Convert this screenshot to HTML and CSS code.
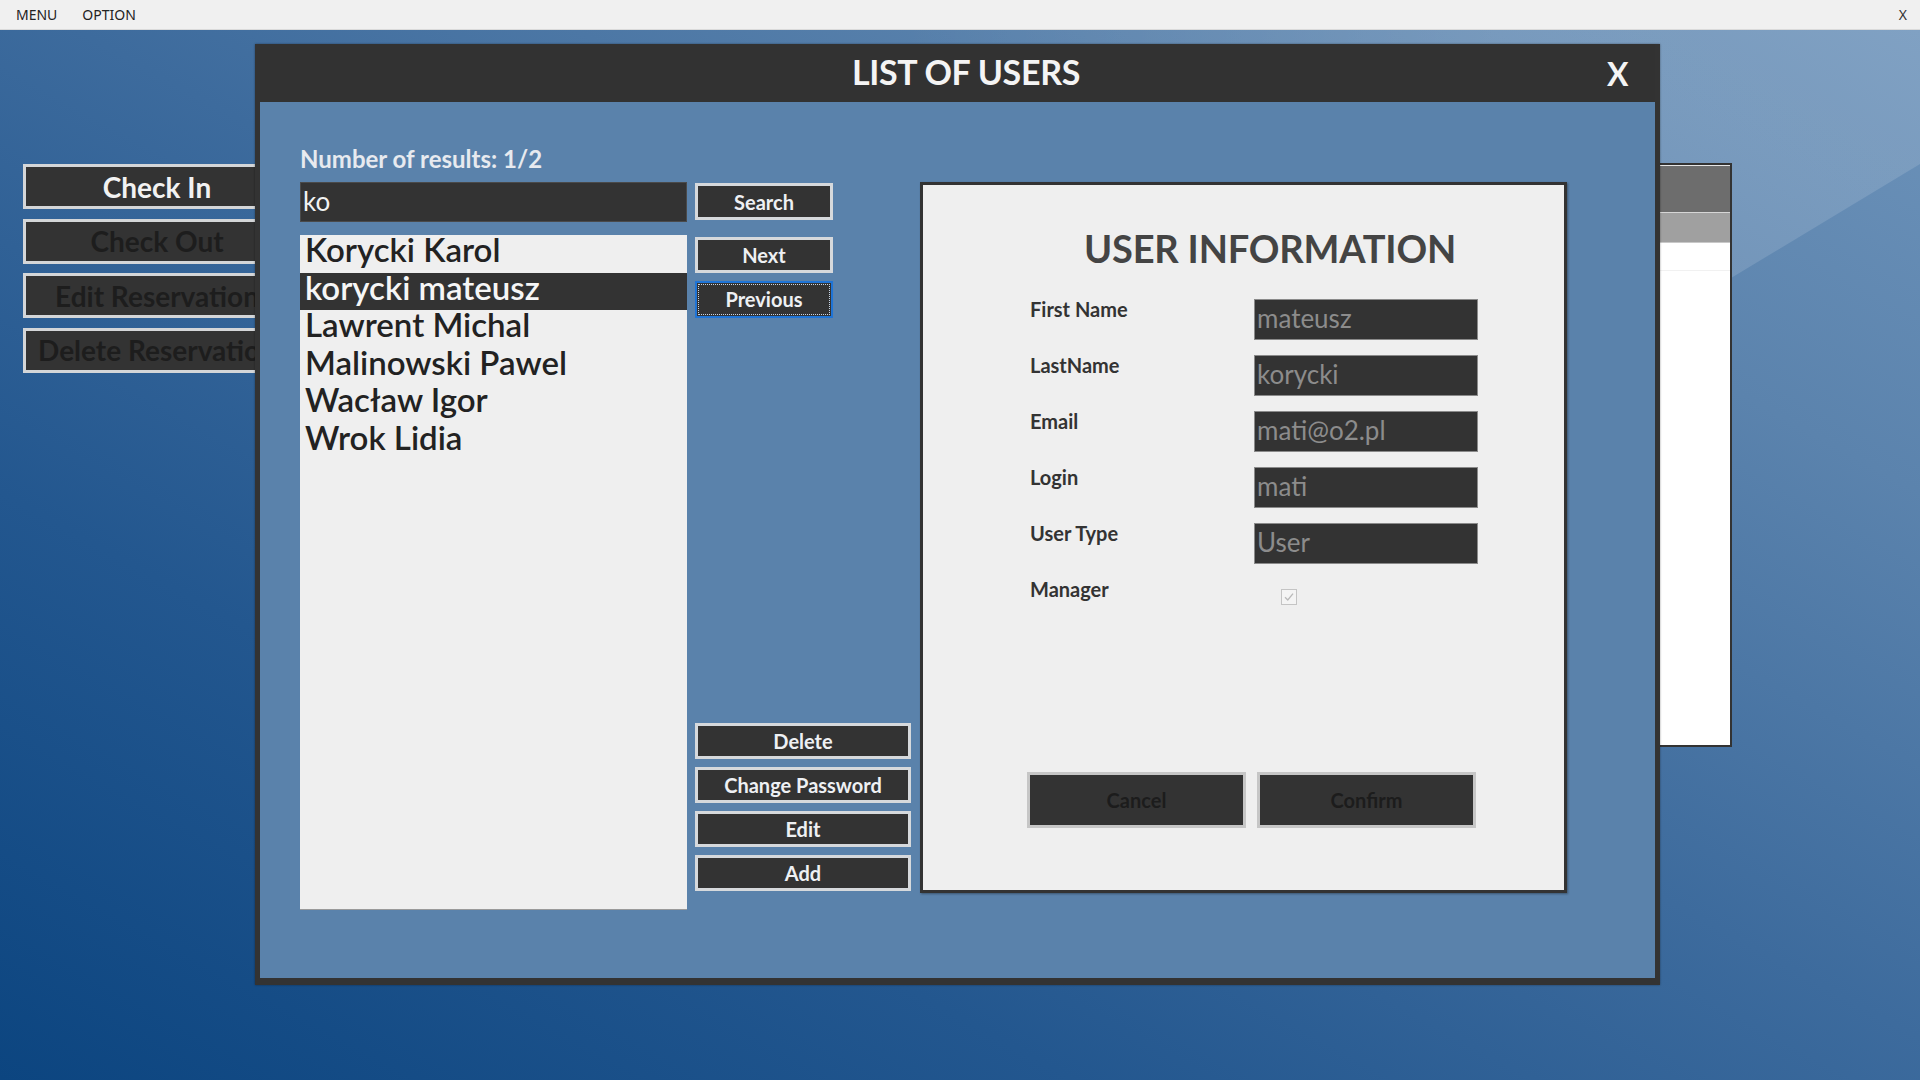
FILE: index.html
```html
<!DOCTYPE html>
<html lang="en">
<head>
<meta charset="utf-8">
<title>List of users</title>
<link rel="stylesheet" href="styles.css">
</head>
<body>
<header class="menubar">
  <nav class="menu-items">
    <span class="menu-item">MENU</span>
    <span class="menu-item">OPTION</span>
  </nav>
  <span class="menu-close">X</span>
</header>

<main class="desktop">
  <div class="sidebar">
    <button class="side-btn active">Check In</button>
    <button class="side-btn">Check Out</button>
    <button class="side-btn">Edit Reservation</button>
    <button class="side-btn">Delete Reservation</button>
  </div>

  <div class="bg-panel">
    <div class="bg-head"></div>
    <div class="bg-sub"></div>
    <div class="bg-row"></div>
  </div>

  <section class="dialog">
    <div class="titlebar">
      <h1 class="title">LIST OF USERS</h1>
      <span class="dialog-close">X</span>
    </div>
    <div class="dialog-body">
      <div class="left-area">
        <div class="count">Number of results: 1/2</div>
        <div class="search-row">
          <div class="search-input">ko</div>
          <button class="btn btn-small">Search</button>
        </div>
        <div class="main-row">
          <ul class="user-list">
            <li class="user">Korycki Karol</li>
            <li class="user selected">korycki mateusz</li>
            <li class="user">Lawrent Michal</li>
            <li class="user">Malinowski Pawel</li>
            <li class="user">Wacław Igor</li>
            <li class="user">Wrok Lidia</li>
          </ul>
          <div class="btn-col">
            <button class="btn btn-small btn-next">Next</button>
            <button class="btn btn-small btn-prev">Previous</button>
            <div class="spacer"></div>
            <div class="action-btns">
              <button class="btn btn-wide">Delete</button>
              <button class="btn btn-wide">Change Password</button>
              <button class="btn btn-wide">Edit</button>
              <button class="btn btn-wide">Add</button>
            </div>
          </div>
        </div>
      </div>

      <div class="info-panel">
        <h2 class="info-title">USER INFORMATION</h2>
        <div class="info-form">
          <div class="label">First Name</div>
          <div class="field">mateusz</div>
          <div class="label">LastName</div>
          <div class="field">korycki</div>
          <div class="label">Email</div>
          <div class="field">mati@o2.pl</div>
          <div class="label">Login</div>
          <div class="field">mati</div>
          <div class="label">User Type</div>
          <div class="field">User</div>
          <div class="label">Manager</div>
          <div class="check-cell">
            <span class="checkbox">
              <svg width="14" height="14" viewBox="0 0 14 14"><path d="M3 7.2 L5.8 10 L11 3.6" fill="none" stroke="#b9b9b9" stroke-width="1.3"/></svg>
            </span>
          </div>
        </div>
        <div class="info-actions">
          <button class="btn-dim">Cancel</button>
          <button class="btn-dim">Confirm</button>
        </div>
      </div>
    </div>
  </section>
</main>
</body>
</html>
```

FILE: styles.css
```css
* { box-sizing: border-box; }

html, body {
  margin: 0;
  padding: 0;
  width: 1920px;
  height: 1080px;
  overflow: hidden;
}

body {
  font-family: Lato, "Open Sans", "Liberation Sans", sans-serif;
  background: #0d4580;
}

button {
  font-family: Lato, "Liberation Sans", sans-serif;
  margin: 0;
  padding: 0;
  cursor: default;
}

/* ---------- top menu bar ---------- */
.menubar {
  height: 30px;
  background: #f0f0f0;
  border-bottom: 1px solid #dadada;
  display: flex;
  align-items: center;
  justify-content: space-between;
  padding: 0 13px 0 16px;
  font-family: "Noto Sans", "Open Sans", sans-serif;
  font-size: 14px;
  color: #222;
}

.menu-items {
  display: flex;
  gap: 25px;
}

.menu-close {
  font-size: 14px;
  color: #333;
}

/* ---------- desktop ---------- */
.desktop {
  position: relative;
  height: 1050px;
  overflow: hidden;
  background: linear-gradient(to top right, #0c4580 0%, #23578f 28%, #3d6b9d 52%, #5b83ad 78%, #6d93ba 100%);
}

.desktop::before {
  content: "";
  position: absolute;
  inset: 0;
  background: linear-gradient(to right, rgba(255, 255, 255, 0) 900px, rgba(255, 255, 255, 0.13) 1500px);
  clip-path: polygon(700px 0, 1920px 0, 1920px 134px, 700px 870px);
}

/* sidebar buttons of the underlying window */
.sidebar {
  position: absolute;
  left: 23px;
  top: 134px;
  display: flex;
  flex-direction: column;
  gap: 9.5px;
}

.side-btn {
  width: 268px;
  height: 45px;
  background: #333;
  border: 3px solid #d4d6d8;
  color: #1d1d1d;
  font-size: 28px;
  font-weight: 700;
  line-height: 36px;
  white-space: nowrap;
  overflow: hidden;
  text-align: center;
}

.side-btn.active {
  color: #f2f2f2;
}

/* right panel of the underlying window */
.bg-panel {
  position: absolute;
  left: 1500px;
  top: 133px;
  width: 232px;
  height: 584px;
  background: #fff;
  border: 2px solid #333;
  display: flex;
  flex-direction: column;
}

.bg-head {
  height: 47px;
  background: #6d6d6d;
  border-top: 1px solid #e6e6e6;
}

.bg-sub {
  height: 31px;
  background: #a0a0a0;
  border-top: 1px solid #d6d6d6;
  border-bottom: 1px solid #c8c8c8;
}

.bg-row {
  height: 28px;
  background: #fff;
  border-bottom: 1px solid #f1f1f1;
}

/* ---------- dialog ---------- */
.dialog {
  position: absolute;
  left: 255px;
  top: 14px;
  width: 1405px;
  height: 941px;
  background: #5a82ab;
  border-style: solid;
  border-color: #333;
  border-width: 0 5px 7px 5px;
  display: flex;
  flex-direction: column;
  box-shadow: 0 0 2px rgba(0, 0, 0, 0.4);
}

.titlebar {
  position: relative;
  height: 58px;
  background: #323232;
  display: flex;
  align-items: center;
  justify-content: center;
  padding-left: 17px;
  flex: none;
}

.title {
  margin: 0;
  font-size: 34px;
  font-weight: 700;
  color: #f4f4f4;
  line-height: 40px;
  letter-spacing: -0.3px;
  margin-top: -2px;
}

.dialog-close {
  position: absolute;
  left: 1347px;
  top: 14px;
  font-size: 32px;
  font-weight: 700;
  line-height: 32px;
  color: #f4f4f4;
}

.dialog-body {
  display: flex;
  align-items: flex-start;
  padding: 43px 0 0 40px;
}

/* left area */
.left-area {
  width: 611px;
  display: flex;
  flex-direction: column;
}

.count {
  height: 26px;
  line-height: 27px;
  font-size: 24px;
  font-weight: 700;
  color: #e7eaef;
  margin-bottom: 11px;
}

.search-row {
  display: flex;
  gap: 8px;
  align-items: flex-start;
}

.search-input {
  width: 387px;
  height: 40px;
  background: #333;
  border: 1px solid #4a4a4a;
  color: #f2f2f2;
  font-size: 26px;
  line-height: 36px;
  padding-left: 2px;
}

.btn {
  background: #333;
  border: 3px solid #d6d9dc;
  color: #eef0f3;
  font-size: 20px;
  font-weight: 700;
  line-height: 28px;
  height: 37px;
  text-align: center;
  white-space: nowrap;
}

.btn-small {
  width: 138px;
}

.search-row .btn {
  margin-top: 1px;
}

.main-row {
  display: flex;
  gap: 8px;
  margin-top: 13px;
}

.user-list {
  list-style: none;
  margin: 0;
  padding: 0;
  width: 387px;
  height: 675px;
  background: #efefef;
  border-bottom: 1px solid #9a9a9a;
}

.user {
  height: 37.5px;
  line-height: 28px;
  font-size: 33px;
  font-weight: 600;
  color: #222;
  padding-left: 5px;
  white-space: nowrap;
}

.user.selected {
  background: #333;
  color: #f6f6f6;
}

.btn-col {
  width: 216px;
  height: 675px;
  display: flex;
  flex-direction: column;
  padding: 2px 0 19px;
}

.btn-next {
  height: 36px;
}

.btn-prev {
  height: 37px;
  margin-top: 8px;
  border: 2px solid #1f74d6;
  outline: 1px dotted #c9d6e6;
  outline-offset: -4px;
  line-height: 31px;
}

.spacer {
  flex: 1;
}

.action-btns {
  display: flex;
  flex-direction: column;
  gap: 8px;
}

.btn-wide {
  width: 216px;
  height: 36px;
  line-height: 27px;
}

/* info panel */
.info-panel {
  width: 647px;
  height: 711px;
  margin-top: 37px;
  margin-left: 9px;
  background: #efefef;
  border: 3px solid #333;
  box-shadow: 1px 1px 2px rgba(0, 0, 0, 0.35);
  display: flex;
  flex-direction: column;
}

.info-title {
  margin: 41px 0 0;
  padding-left: 53px;
  text-align: center;
  font-size: 38px;
  font-weight: 700;
  line-height: 44px;
  color: #444;
  letter-spacing: -0.2px;
}

.info-form {
  display: grid;
  grid-template-columns: 224px 224px;
  grid-auto-rows: 41px;
  row-gap: 15px;
  margin: 29px 0 0 107px;
}

.label {
  font-size: 20px;
  font-weight: 700;
  line-height: 20px;
  color: #333;
}

.field {
  background: #333;
  border: 1px solid #8a8a8a;
  color: #8c8c8c;
  font-size: 26px;
  line-height: 37px;
  padding-left: 2px;
  white-space: nowrap;
  overflow: hidden;
}

.check-cell {
  padding: 10px 0 0 27px;
}

.checkbox {
  display: flex;
  align-items: center;
  justify-content: center;
  width: 16px;
  height: 16px;
  border: 1px solid #c4c4c4;
  background: #f4f4f4;
}

.info-actions {
  display: flex;
  gap: 11px;
  margin: 152px 0 0 104px;
}

.btn-dim {
  width: 219px;
  height: 56px;
  background: #333;
  border: 3px solid #c6c6c6;
  color: #1c1c1c;
  font-size: 20px;
  font-weight: 700;
  line-height: 48px;
  text-align: center;
}
```
